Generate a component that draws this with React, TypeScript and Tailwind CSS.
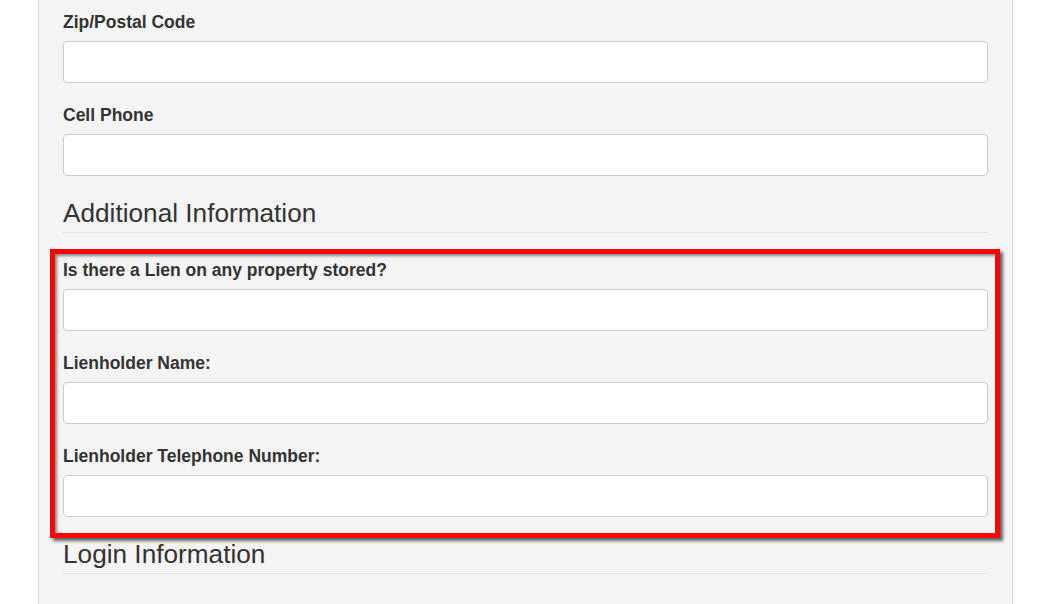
import React from "react";

function Field({ label, last }: { label: string; last?: boolean }) {
  return (
    <div className={last ? "" : "mb-[22px]"}>
      <label className="block text-[17.5px] font-bold leading-[20px] mb-[9px] text-[#333]">
        {label}
      </label>
      <input
        type="text"
        className="block w-full h-[42px] rounded-[4px] border border-[#ccc] bg-white outline-none"
      />
    </div>
  );
}

function SectionTitle({ children }: { children: React.ReactNode }) {
  return (
    <h3 className="mt-[23px] pb-[4px] border-b border-[#e3e3e3] text-[26.2px] leading-[29px] font-normal text-[#333]">
      {children}
    </h3>
  );
}

export default function App() {
  return (
    <div
      className="w-full h-[604px] overflow-hidden bg-white"
      style={{ fontFamily: '"Liberation Sans", Arial, sans-serif' }}
    >
      <div className="ml-[38px] w-[975px] h-full border-x border-[#dcdcdc] bg-[#f4f4f4] pl-[24px] pr-[24px] pt-[12px]">
        <Field label="Zip/Postal Code" />
        <Field label="Cell Phone" last />

        <SectionTitle>Additional Information</SectionTitle>

        <div className="relative mt-[27px]">
          <Field label="Is there a Lien on any property stored?" />
          <Field label="Lienholder Name:" />
          <Field label="Lienholder Telephone Number:" last />
          {/* annotation box */}
          <div className="pointer-events-none absolute top-[-11px] left-[-13px] right-[-12px] bottom-[-21px] border-[5px] border-[#ff0000] shadow-[3px_3px_3px_rgba(0,0,0,0.6),inset_2px_2px_3px_rgba(0,0,0,0.45)]" />
        </div>

        <SectionTitle>Login Information</SectionTitle>
      </div>
    </div>
  );
}
